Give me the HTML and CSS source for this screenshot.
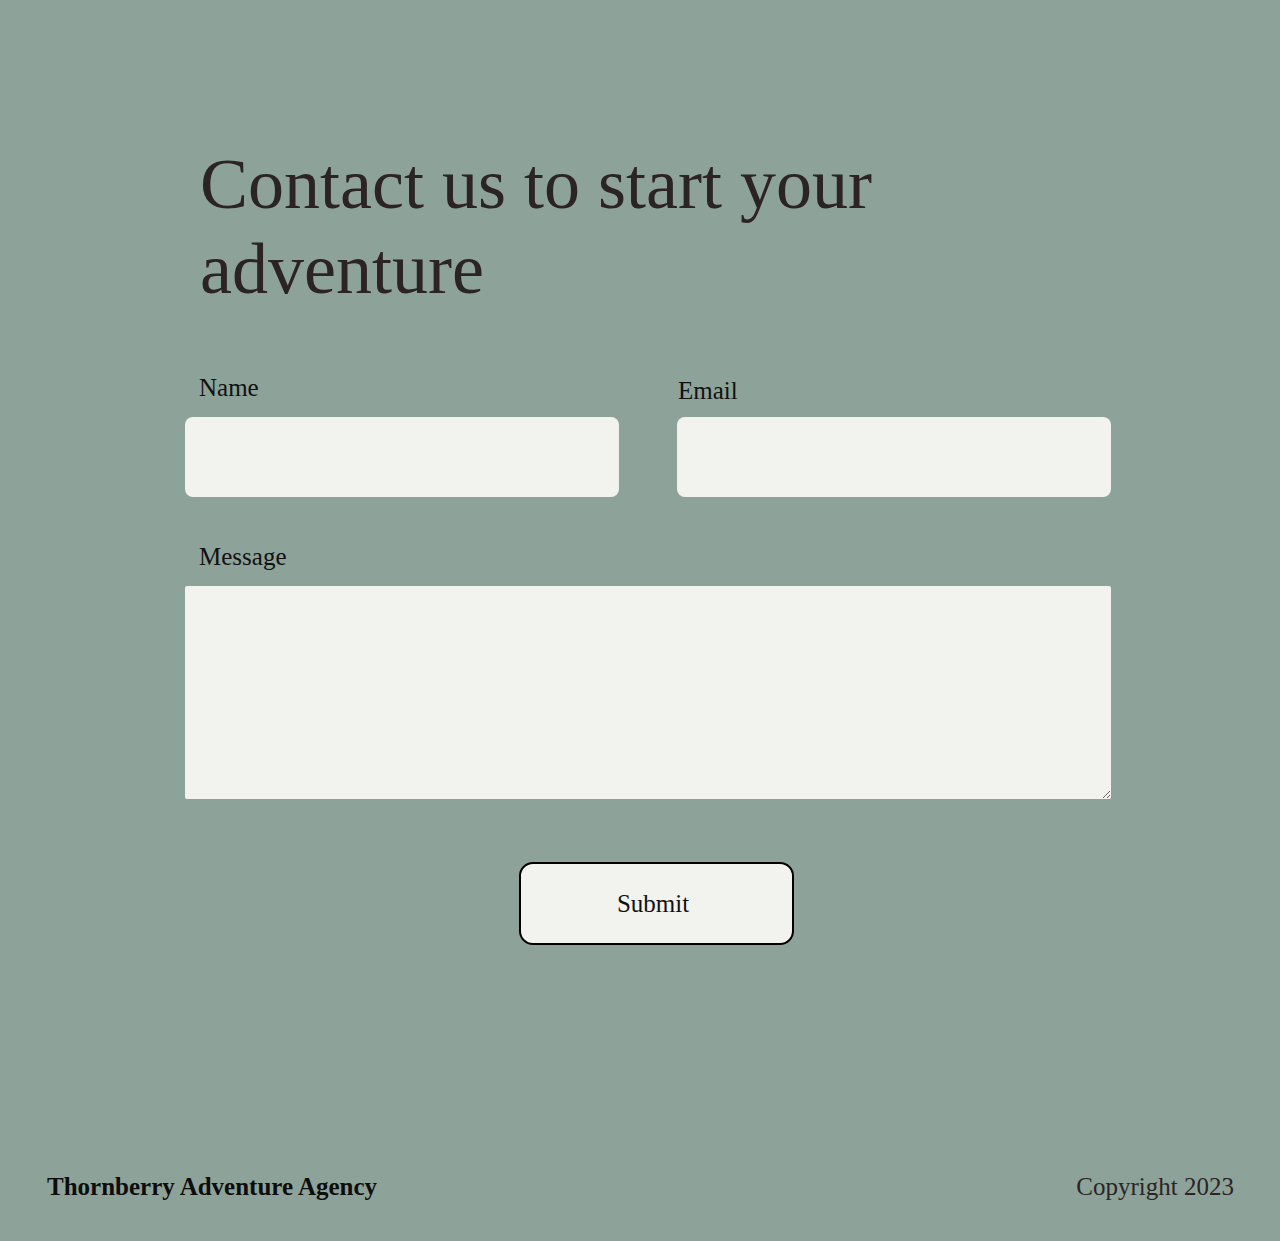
FILE: index.html
```html
<!DOCTYPE html>
<html lang="en">
<head>
<meta charset="utf-8">
<title>Contact</title>
<link rel="stylesheet" href="styles.css">
</head>
<body>
<main class="page">
  <h1 class="title">Contact us to start your adventure</h1>
  <form class="form">
    <div class="row">
      <div class="field field-name">
        <label class="label" for="name">Name</label>
        <input class="input" id="name" type="text">
      </div>
      <div class="field field-email">
        <label class="label" for="email">Email</label>
        <input class="input" id="email" type="email">
      </div>
    </div>
    <div class="field field-message">
      <label class="label" for="message">Message</label>
      <textarea class="textarea" id="message"></textarea>
    </div>
    <div class="actions">
      <button class="submit" type="button">Submit</button>
    </div>
  </form>
</main>
<footer class="footer">
  <span class="brand">Thornberry Adventure Agency</span>
  <span class="copy">Copyright 2023</span>
</footer>
</body>
</html>
```
FILE: styles.css
```css
* { box-sizing: border-box; }
html, body {
  margin: 0;
  padding: 0;
}
body {
  background: #8da399;
  font-family: "Liberation Serif", "Times New Roman", serif;
  color: #111;
  min-height: 1241px;
  display: flex;
  flex-direction: column;
}
.page {
  flex: 1;
  padding: 142px 169px 0 185px;
}
.title {
  margin: 0 0 60px 15px;
  font-size: 72px;
  line-height: 85px;
  font-weight: 400;
  color: #2c2325;
  max-width: 720px;
}
.form {
  display: flex;
  flex-direction: column;
}
.row {
  display: flex;
  gap: 58px;
}
.field {
  display: flex;
  flex-direction: column;
  flex: 1;
}
.label {
  font-size: 25px;
  line-height: 32px;
  margin-left: 14px;
  margin-bottom: 13px;
}
.field-email .label {
  margin-left: 1px;
  padding-top: 3px;
  margin-bottom: 10px;
}
.input {
  height: 80px;
  border: none;
  border-radius: 8px;
  background: #f2f2ee;
  font: inherit;
  font-size: 20px;
  padding: 0 16px;
}
.field-message {
  margin-top: 44px;
}
.textarea {
  display: block;
  height: 213px;
  border: none;
  border-radius: 2px;
  background: #f2f2ee;
  font: inherit;
  font-size: 20px;
  padding: 12px 16px;
  resize: vertical;
}
.actions {
  display: flex;
  justify-content: center;
  margin-top: 63px;
  padding-left: 16px;
}
.submit {
  width: 275px;
  height: 83px;
  border: 2px solid #000;
  border-radius: 14px;
  background: #f2f2ee;
  font-family: inherit;
  font-size: 25px;
  color: #111;
  padding: 0 6px 0 0;
}
.footer {
  display: flex;
  justify-content: space-between;
  align-items: center;
  padding: 0 46px 38px 47px;
  font-size: 25px;
  line-height: 32px;
}
.brand {
  font-weight: 600;
  color: #0d0d0d;
}
.copy {
  color: #2c2325;
}
```
